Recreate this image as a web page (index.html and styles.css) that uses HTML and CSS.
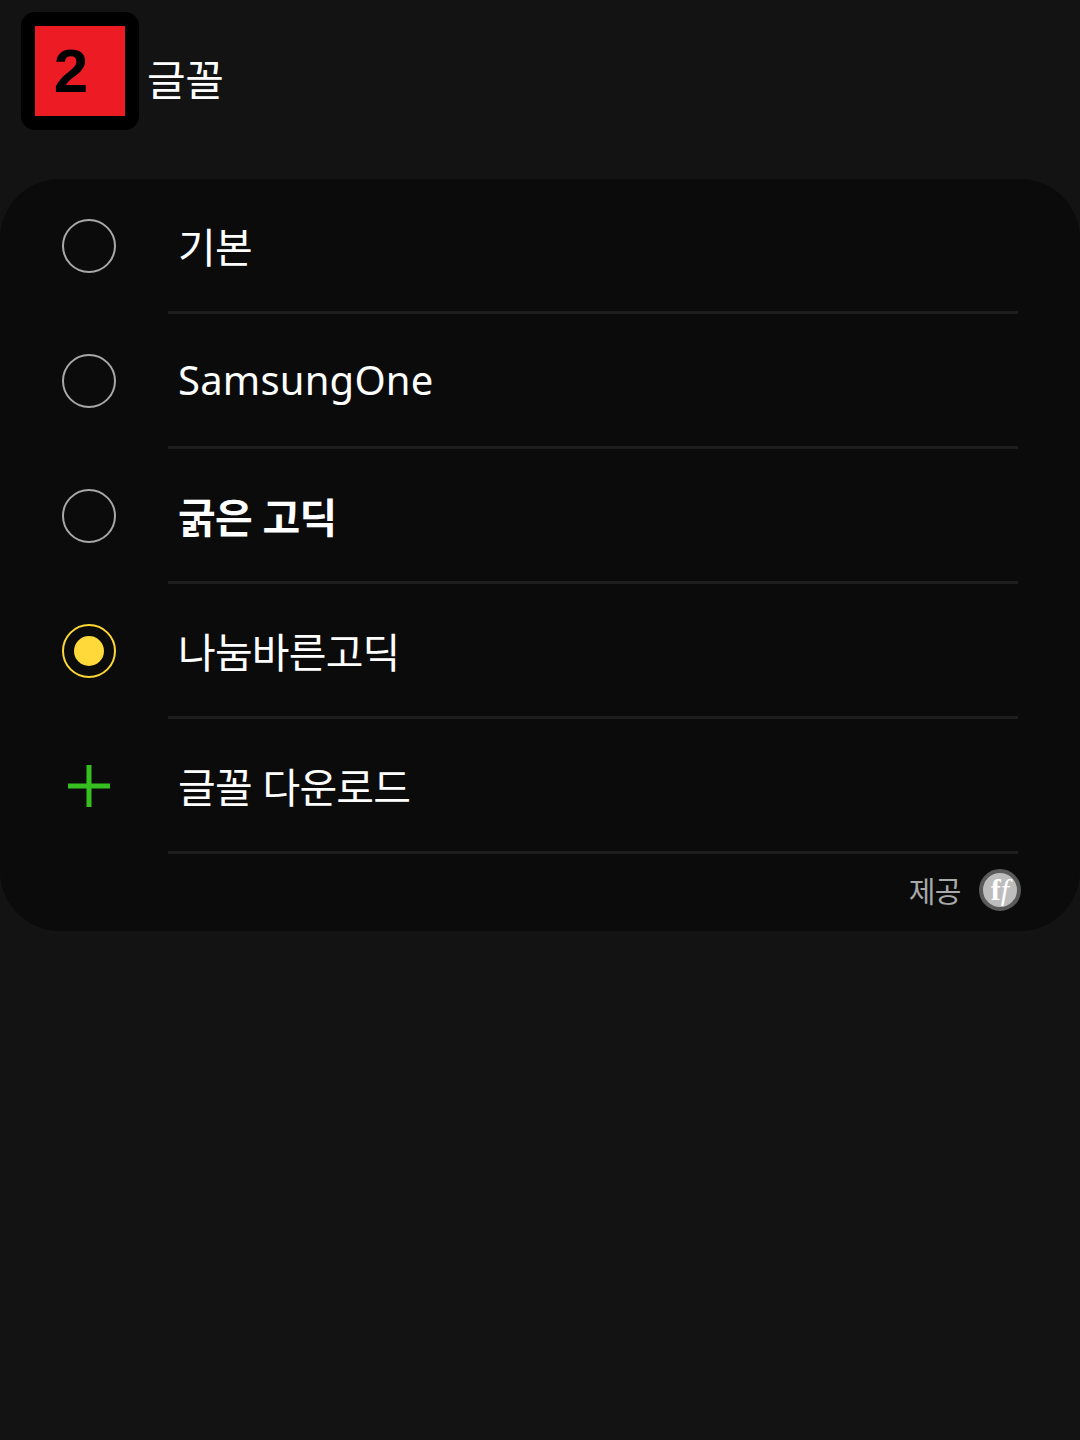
FILE: index.html
```html
<!DOCTYPE html>
<html lang="ko">
<head>
<meta charset="utf-8">
<title>글꼴</title>
<link rel="stylesheet" href="styles.css">
</head>
<body>
<header class="header">
  <div class="badge"><div class="badge-inner">2</div></div>
  <h1 class="title">글꼴</h1>
</header>
<main class="card">
  <div class="row">
    <span class="icon-cell"><span class="radio"></span></span>
    <div class="row-body"><span class="label">기본</span></div>
  </div>
  <div class="row">
    <span class="icon-cell"><span class="radio"></span></span>
    <div class="row-body"><span class="label label-latin">SamsungOne</span></div>
  </div>
  <div class="row">
    <span class="icon-cell"><span class="radio"></span></span>
    <div class="row-body"><span class="label label-bold">굵은 고딕</span></div>
  </div>
  <div class="row">
    <span class="icon-cell"><span class="radio radio-on"><span class="radio-dot"></span></span></span>
    <div class="row-body"><span class="label">나눔바른고딕</span></div>
  </div>
  <div class="row">
    <span class="icon-cell">
      <svg class="plus" width="42" height="42" viewBox="0 0 42 42"><path d="M0 21H42M21 0V42" stroke="#35c020" stroke-width="5" fill="none"/></svg>
    </span>
    <div class="row-body"><span class="label">글꼴 다운로드</span></div>
  </div>
  <div class="credit">
    <span class="credit-text">제공</span>
    <span class="ff"><span class="ff-b">f</span><span class="ff-i">f</span></span>
  </div>
</main>
</body>
</html>
```
FILE: styles.css
```css
* { box-sizing: border-box; }
html, body { margin: 0; height: 1440px; overflow: hidden; }
body {
  background: #131313;
  color: #fff;
  font-family: "Noto Sans CJK KR", "Noto Sans", sans-serif;
}
.header {
  display: flex;
  align-items: flex-start;
  height: 179px;
  padding: 12px 0 0 21px;
}
.badge {
  width: 118px;
  height: 118px;
  padding: 14px;
  background: #000;
  border-radius: 14px;
}
.badge-inner {
  width: 90px;
  height: 90px;
  background: #ed1c24;
  color: #000;
  font: 700 62px/90px "Liberation Sans", sans-serif;
  text-align: center;
  padding-right: 18px;
}
.title {
  margin: 36px 0 0 8px;
  font-size: 42px;
  font-weight: 400;
  line-height: 60px;
  letter-spacing: -0.5px;
}
.card {
  height: 752px;
  background: #0b0b0b;
  border-radius: 60px;
}
.row {
  display: flex;
  height: 135px;
}
.icon-cell {
  width: 178px;
  height: 133px;
  flex: none;
  display: flex;
  align-items: center;
  padding-left: 62px;
}
.row-body {
  flex: none;
  width: 850px;
  margin-left: -10px;
  padding-left: 10px;
  border-bottom: 3px solid #1e1e1e;
  display: flex;
  align-items: center;
}
.label { font-size: 41px; line-height: 60px; letter-spacing: -0.8px; }
.label-latin { font-family: "Noto Sans", sans-serif; font-size: 40px; letter-spacing: 0.2px; }
.label-bold { font-weight: 700; }
.radio {
  width: 54px;
  height: 54px;
  border: 2px solid #a8a8a8;
  border-radius: 50%;
  display: flex;
  align-items: center;
  justify-content: center;
}
.radio-on { border-color: #fdd835; }
.radio-dot { width: 30px; height: 30px; border-radius: 50%; background: #ffd83a; }
.plus { margin-left: 6px; }
.credit {
  display: flex;
  align-items: center;
  justify-content: flex-end;
  gap: 18px;
  height: 72px;
  padding-right: 59px;
}
.credit-text { font-size: 29px; color: #a9a9a9; letter-spacing: -0.5px; }
.ff {
  width: 42px;
  height: 42px;
  border: 4px solid #5a5a5a;
  border-radius: 50%;
  background: #bdbdbd;
  display: flex;
  align-items: center;
  justify-content: center;
  color: #fff;
  font-size: 30px;
  line-height: 1;
  font-family: "Liberation Serif", serif;
}
.ff-b { font-weight: 700; }
.ff-i { font-style: italic; }
```
